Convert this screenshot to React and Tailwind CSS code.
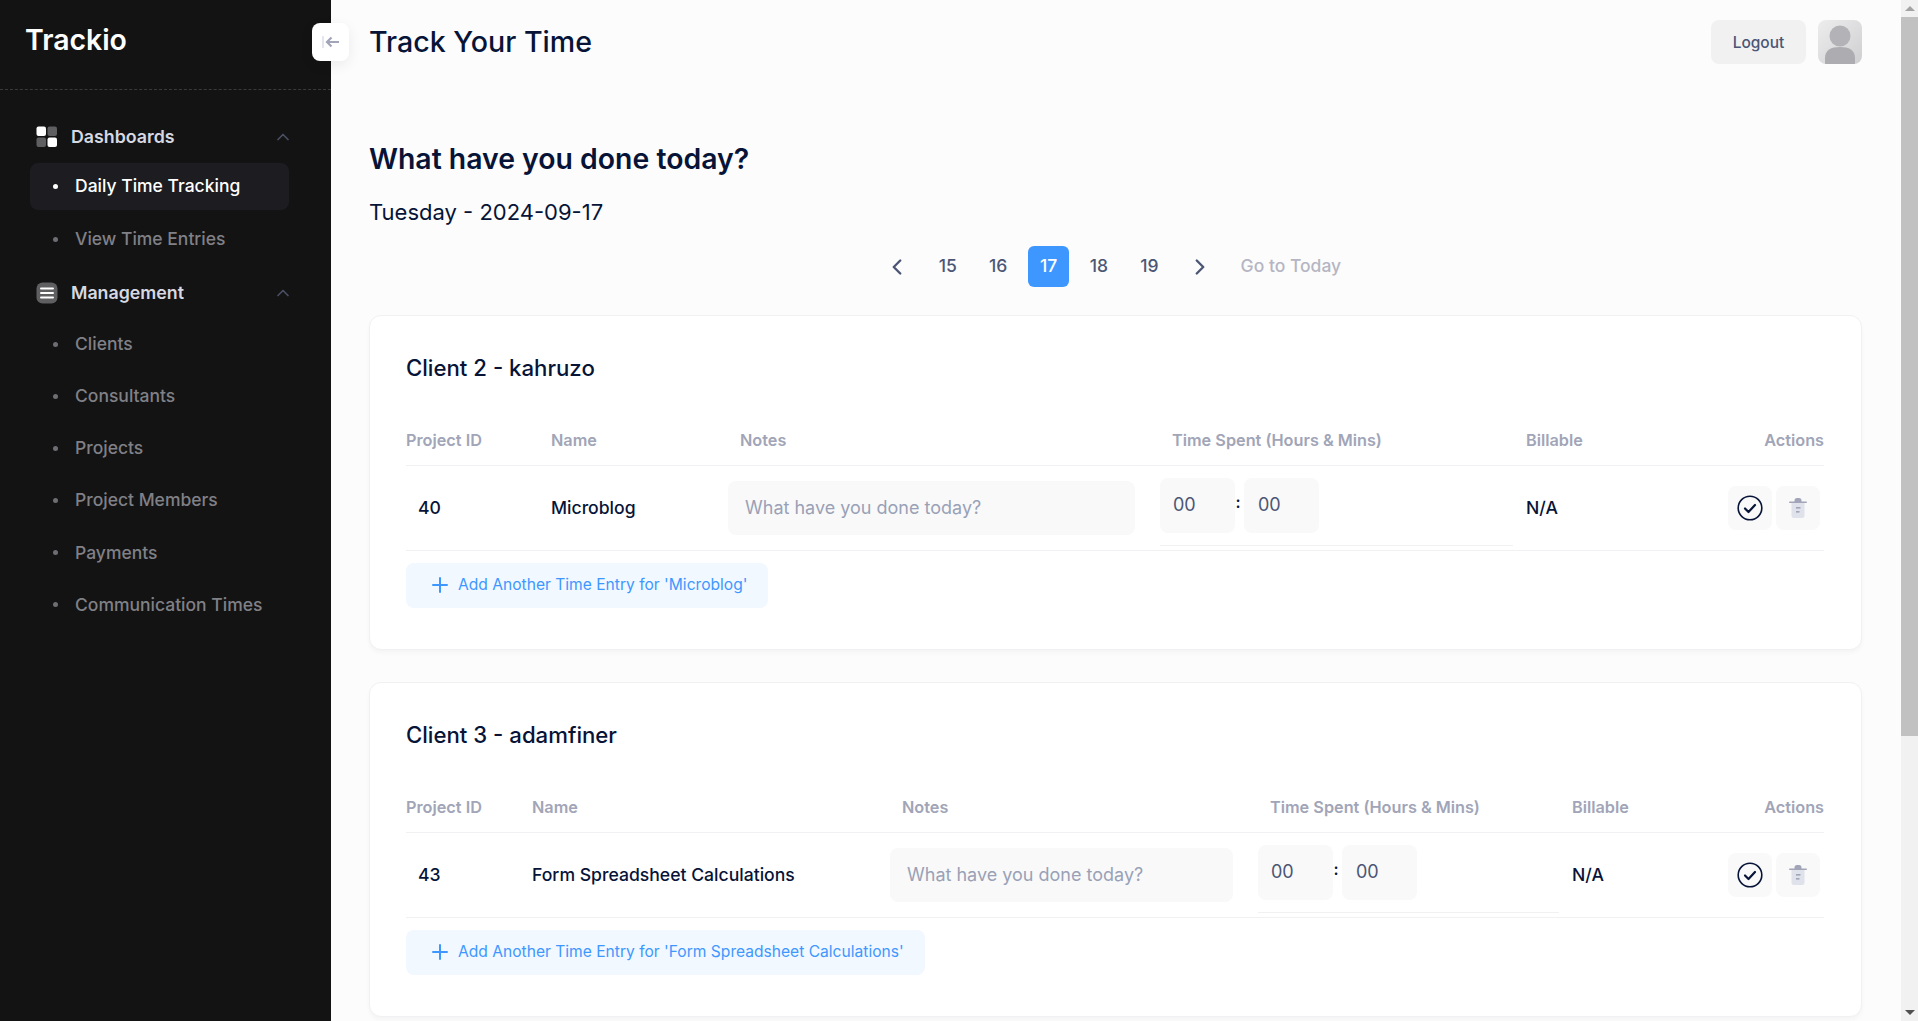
import React from 'react';
import { ChevronLeft, ChevronRight, ChevronUp, Plus } from 'lucide-react';

const mgmtLinks = ['Clients', 'Consultants', 'Projects', 'Project Members', 'Payments', 'Communication Times'];

const DashIcon = () => (
    <svg width="22" height="22" viewBox="0 0 22 22">
        <rect x="0.5" y="0.5" width="9.5" height="9.5" rx="2" fill="#ffffff" />
        <rect x="11.5" y="0.5" width="9.5" height="9.5" rx="2" fill="#5f5f62" />
        <rect x="0.5" y="11.5" width="9.5" height="9.5" rx="2" fill="#5f5f62" />
        <rect x="11.5" y="11.5" width="9.5" height="9.5" rx="2" fill="#ffffff" />
    </svg>
);

const MenuIcon = () => (
    <svg width="22" height="22" viewBox="0 0 22 22">
        <rect x="0.5" y="0.5" width="21" height="21" rx="6" fill="#5f5f62" />
        <rect x="4" y="5.5" width="14" height="2" rx="1" fill="#ffffff" />
        <rect x="4" y="10" width="14" height="2" rx="1" fill="#ffffff" />
        <rect x="4" y="14.5" width="14" height="2" rx="1" fill="#ffffff" />
    </svg>
);

const CheckIcon = () => (
    <svg width="26" height="26" viewBox="0 0 26 26" fill="none">
        <circle cx="13" cy="13" r="11.8" stroke="#071437" strokeWidth="1.6" />
        <path d="M8 13.5l3.5 3.5 6.5-7" stroke="#071437" strokeWidth="2.2" strokeLinecap="round" strokeLinejoin="round" />
    </svg>
);

const TrashIcon = () => (
    <svg width="20" height="22" viewBox="0 0 20 22" fill="none">
        <path d="M3.5 6h13v12.5a2.5 2.5 0 0 1-2.5 2.5H6a2.5 2.5 0 0 1-2.5-2.5z" fill="#dfe2ea" />
        <path d="M6.5 5V3.5a2.5 2.5 0 0 1 2.5-2.5h2a2.5 2.5 0 0 1 2.5 2.5V5z" fill="#a1a5b7" />
        <rect x="1" y="4.5" width="18" height="1.6" rx="0.8" fill="#a1a5b7" />
        <rect x="8" y="10" width="4.5" height="1.6" fill="#a1a5b7" />
        <rect x="8" y="14" width="3.5" height="1.6" fill="#a1a5b7" />
    </svg>
);

const Avatar = () => (
    <div className="w-[44px] h-[44px] rounded-lg overflow-hidden bg-gradient-to-br from-[#ededee] to-[#cfcfd1]">
        <svg width="44" height="44" viewBox="0 0 44 44">
            <circle cx="22" cy="16" r="10.5" fill="#b3b3b7" />
            <path d="M7 44V38c0-8 6-11 15-11s15 3 15 11v6z" fill="#adadb1" />
        </svg>
    </div>
);

const NavLink = ({ label, active, up }) => (
    <div className={`flex items-center h-[47px] rounded-lg pl-[23px] ${up ? 'pb-px' : ''} ${active ? 'bg-[#1c1c21] text-white' : 'text-[#808087]'}`}>
        <span className={`w-[5px] h-[5px] rounded-full mr-[17px] ${active ? 'bg-white' : 'bg-[#6d6d73]'}`}></span>
        <span className="text-[17.5px] font-medium">{label}</span>
    </div>
);

const NavGroup = ({ icon, label }) => (
    <div className="flex items-center h-[44px] pl-[36px] pr-[38px] text-[#d6d8e2]">
        {icon}
        <span className="ml-[13px] text-[17.8px] font-semibold flex-1">{label}</span>
        <ChevronUp size={20} className="text-[#4b4f63]" />
    </div>
);

const Sidebar = () => (
    <aside className="w-[331px] h-full shrink-0 bg-[#131313]">
        <div className="h-[90px] border-b border-dashed border-[#3a3a3d] pl-[25px] pt-[20px]">
            <span className="text-[28.4px] leading-[40px] font-semibold text-white">Trackio</span>
        </div>
        <nav className="pt-[25px]">
            <NavGroup icon={<DashIcon />} label="Dashboards" />
            <div className="pl-[30px] pr-[42px] mt-[4px]">
                <NavLink label="Daily Time Tracking" active up />
            </div>
            <div className="pl-[30px] pr-[42px] mt-[6px]">
                <NavLink label="View Time Entries" up />
            </div>
            <div className="mt-[8px]">
                <NavGroup icon={<MenuIcon />} label="Management" />
            </div>
            <div className="pl-[30px] pr-[42px] mt-[5.5px] flex flex-col gap-[5.2px]">
                {mgmtLinks.map((label) => <NavLink key={label} label={label} />)}
            </div>
        </nav>
    </aside>
);

const Pagination = () => (
    <div className="flex items-center justify-center gap-[9.4px] mt-[20px] text-[#4b5675] text-[17.5px] font-medium">
        <div className="w-[41px] h-[41px] flex items-center justify-center"><ChevronLeft size={26} strokeWidth={2.2} /></div>
        {[15, 16, 17, 18, 19].map((n) => (
            <div key={n} className={`w-[41px] h-[41px] rounded-md flex items-center justify-center ${n === 17 ? 'bg-[#3e97ff] text-white' : ''}`}>{n}</div>
        ))}
        <div className="w-[41px] h-[41px] flex items-center justify-center"><ChevronRight size={26} strokeWidth={2.2} /></div>
        <div className="-ml-[2px] px-[13px] text-[#b5b5c3]">Go to Today</div>
    </div>
);

const ClientCard = ({ title, id, name, cols, lineWidth }) => (
    <section className="bg-white rounded-xl border border-[#f1f1f4] shadow-[0_3px_4px_rgba(0,0,0,0.03)] h-[335px] px-[36px] pt-[37px]">
        <h3 className="text-[22.2px] leading-[30px] font-[550] text-[#071437]">{title}</h3>
        <table className="table-fixed mt-[45px] w-[1418px] border-collapse">
            <thead>
                <tr className="h-[37px] border-b border-[#f1f1f4] text-left text-[16.25px] text-[#a1a5b7]">
                    <th className="font-semibold align-top" style={{ width: cols[0] }}>Project ID</th>
                    <th className="font-semibold align-top" style={{ width: cols[1] }}>Name</th>
                    <th className="font-semibold align-top pl-[12px]" style={{ width: cols[2] }}>Notes</th>
                    <th className="font-semibold align-top pl-[12px]" style={{ width: cols[3] }}>Time Spent (Hours &amp; Mins)</th>
                    <th className="font-semibold align-top">Billable</th>
                    <th className="font-semibold align-top text-right w-[100px]">Actions</th>
                </tr>
            </thead>
            <tbody>
                <tr className="h-[85px] border-b border-[#f1f1f4] text-[17.6px] font-medium text-[#071437]">
                    <td className="pl-[12px] pt-[2px]">{id}</td>
                    <td className="whitespace-nowrap pt-[2px]">{name}</td>
                    <td>
                        <div className="h-[54px] mr-[25px] rounded-lg bg-[#f9f9f9] flex items-center px-[17px] text-[#99a1b7] text-[18px] font-normal">What have you done today?</div>
                    </td>
                    <td>
                        <div className="pb-[12px] border-b border-[#f1f1f4] -mb-[8px]" style={{ width: lineWidth }}>
                            <div className="flex items-start font-normal text-[18px] text-[#4b5675]">
                                <div className="w-[75px] h-[55px] rounded-lg bg-[#f9f9f9] pl-[13px] leading-[53px]">00</div>
                                <span className="w-[9px] pr-[3px] text-center text-[#071437] leading-[49px] text-[16px] font-semibold">:</span>
                                <div className="w-[75px] h-[55px] rounded-lg bg-[#f9f9f9] pl-[14px] leading-[53px]">00</div>
                            </div>
                        </div>
                    </td>
                    <td className="pt-[2px]">N/A</td>
                    <td>
                        <div className="flex justify-end gap-[4px] pr-[4px]">
                            <div className="w-[44px] h-[44px] rounded-lg bg-[#f9f9f9] flex items-center justify-center"><CheckIcon /></div>
                            <div className="w-[44px] h-[44px] rounded-lg bg-[#f9f9f9] flex items-center justify-center"><TrashIcon /></div>
                        </div>
                    </td>
                </tr>
            </tbody>
        </table>
        <div className="mt-[12px] inline-flex items-center h-[45px] pl-[22px] pr-[21px] rounded-lg bg-[#f1f8ff] text-[#3e97ff] text-[15.6px] font-normal">
            <Plus size={24} strokeWidth={2} className="mr-[6px]" />
            Add Another Time Entry for '{name}'
        </div>
    </section>
);

const App = () => (
    <div className="relative flex h-screen overflow-hidden bg-[#fcfcfc]" style={{ fontFamily: 'Inter, sans-serif' }}>
        <Sidebar />

        {/* sidebar toggle sits across the sidebar edge */}
        <button className="absolute left-[312px] top-[23px] w-[37px] h-[38px] rounded-lg bg-white shadow-[0_4px_14px_rgba(0,0,0,0.07)] flex items-center justify-center">
            <svg width="18" height="12" viewBox="0 0 18 12" fill="none">
                <rect x="0" y="0" width="2" height="12" fill="#e4e6ef" />
                <path d="M5 6h12M9.5 1.5L5 6l4.5 4.5" stroke="#a1a5b7" strokeWidth="2.2" />
            </svg>
        </button>

        <main className="flex-1 min-w-0 pl-[38px] pr-[39px]">
            <header className="flex items-center justify-between h-[64px] pt-[20px]">
                <h1 className="text-[28.6px] font-medium text-[#071437]">Track Your Time</h1>
                <div className="flex items-center gap-[12px]">
                    <div className="w-[95px] h-[44px] pt-px rounded-lg bg-[#f1f1f2] flex items-center justify-center text-[15.5px] font-medium text-[#4b5675]">Logout</div>
                    <Avatar />
                </div>
            </header>
            <h2 className="mt-[76px] text-[28.4px] leading-[38px] font-semibold text-[#071437]">What have you done today?</h2>
            <p className="mt-[20px] text-[22px] leading-[28px] text-[#071437]">Tuesday - 2024-09-17</p>
            <Pagination />
            <div className="mt-[28px] flex flex-col gap-[32px]">
                <ClientCard title="Client 2 - kahruzo" id="40" name="Microblog" cols={[145, 177, 432, 366]} lineWidth={353} />
                <ClientCard title="Client 3 - adamfiner" id="43" name="Form Spreadsheet Calculations" cols={[126, 358, 368, 314]} lineWidth={301} />
            </div>
        </main>

        {/* browser scrollbar */}
        <div className="w-[17px] h-full shrink-0 bg-[#f1f1f1] flex flex-col items-center">
            <div className="h-[17px] flex items-center justify-center"><span className="border-x-[5px] border-x-transparent border-b-[5px] border-b-[#a3a3a3]"></span></div>
            <div className="w-full h-[719px] bg-[#c1c1c1]"></div>
            <div className="flex-1"></div>
            <div className="h-[17px] flex items-center justify-center"><span className="border-x-[5px] border-x-transparent border-t-[5px] border-t-[#505050]"></span></div>
        </div>
    </div>
);

export default App;
